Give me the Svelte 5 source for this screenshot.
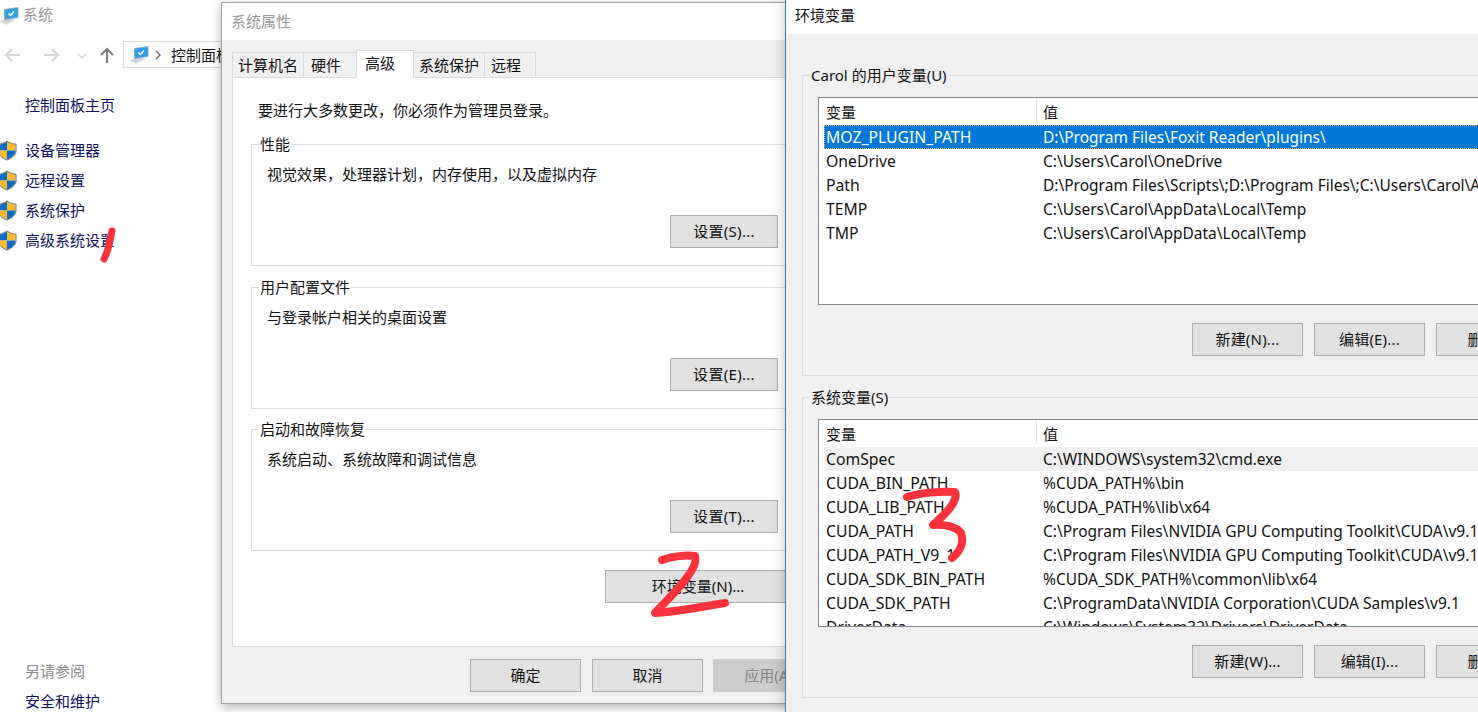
<script>
  const links = ['设备管理器', '远程设置', '系统保护', '高级系统设置'];

  const groups = [
    { title: '性能', desc: '视觉效果，处理器计划，内存使用，以及虚拟内存', btn: '设置(S)...' },
    { title: '用户配置文件', desc: '与登录帐户相关的桌面设置', btn: '设置(E)...' },
    { title: '启动和故障恢复', desc: '系统启动、系统故障和调试信息', btn: '设置(T)...' }
  ];

  const tabs = ['计算机名', '硬件', '高级', '系统保护', '远程'];

  const userVars = [
    ['MOZ_PLUGIN_PATH', 'D:\\Program Files\\Foxit Reader\\plugins\\'],
    ['OneDrive', 'C:\\Users\\Carol\\OneDrive'],
    ['Path', 'D:\\Program Files\\Scripts\\;D:\\Program Files\\;C:\\Users\\Carol\\AppData\\Local\\Programs'],
    ['TEMP', 'C:\\Users\\Carol\\AppData\\Local\\Temp'],
    ['TMP', 'C:\\Users\\Carol\\AppData\\Local\\Temp']
  ];

  const sysVars = [
    ['ComSpec', 'C:\\WINDOWS\\system32\\cmd.exe'],
    ['CUDA_BIN_PATH', '%CUDA_PATH%\\bin'],
    ['CUDA_LIB_PATH', '%CUDA_PATH%\\lib\\x64'],
    ['CUDA_PATH', 'C:\\Program Files\\NVIDIA GPU Computing Toolkit\\CUDA\\v9.1'],
    ['CUDA_PATH_V9_1', 'C:\\Program Files\\NVIDIA GPU Computing Toolkit\\CUDA\\v9.1'],
    ['CUDA_SDK_BIN_PATH', '%CUDA_SDK_PATH%\\common\\lib\\x64'],
    ['CUDA_SDK_PATH', 'C:\\ProgramData\\NVIDIA Corporation\\CUDA Samples\\v9.1'],
    ['DriverData', 'C:\\Windows\\System32\\Drivers\\DriverData']
  ];

  const varGroups = [
    { title: 'Carol 的用户变量(U)', rows: userVars, cls: 'selected', btns: ['新建(N)...', '编辑(E)...', '删除(L)'] },
    { title: '系统变量(S)', rows: sysVars, cls: 'hover', btns: ['新建(W)...', '编辑(I)...', '删除(L)'] }
  ];
</script>

{#snippet computer()}
  <svg class="pc" width="19" height="18" viewBox="0 0 19 18">
    <path d="M0 14.5 L8 11 L15 13 L6 17.5 Z" fill="#cfd3d6" stroke="#e4e6e8" stroke-width="0.6" />
    <path d="M4.5 2.5 L18 0.5 L18 10.5 L4.5 12.5 Z" fill="#2f9fe6" stroke="#8fa6b5" stroke-width="0.8" />
    <path d="M8.5 6.5 L10.5 8.5 L14 4.5" fill="none" stroke="#fff" stroke-width="1.5" />
  </svg>
{/snippet}

{#snippet shield()}
  <svg class="shield" width="20" height="21" viewBox="0 0 20 21">
    <path d="M1.5 4.5 C4.5 4.5 7.5 3.2 10 1.2 L10 10.5 L1.5 10.5 Z" fill="#0a6cc4" />
    <path d="M18.5 4.5 C15.5 4.5 12.5 3.2 10 1.2 L10 10.5 L18.5 10.5 Z" fill="#fcb92c" />
    <path d="M1.5 10.5 L10 10.5 L10 19.6 C5.5 17.8 1.5 15 1.5 11 Z" fill="#fcb92c" />
    <path d="M18.5 10.5 L10 10.5 L10 19.6 C14.5 17.8 18.5 15 18.5 11 Z" fill="#0a6cc4" />
    <path d="M10 1 C7 3 4 4.2 1 4.2 L1 11 C1 15 5 18 10 20 C15 18 19 15 19 11 L19 4.2 C16 4.2 13 3 10 1 Z" fill="none" stroke="#6b6b6b" stroke-width="1" />
  </svg>
{/snippet}

<div class="desktop">
  <div class="system">
    <div class="sys-title">
      {@render computer()}
      <span>系统</span>
    </div>
    <div class="nav">
      <svg width="112" height="27" viewBox="0 0 112 27">
        <path d="M20 14 L6 14 M12 8 L6 14 L12 20" fill="none" stroke="#d4d4d4" stroke-width="2" />
        <path d="M44 14 L58 14 M52 8 L58 14 L52 20" fill="none" stroke="#d4d4d4" stroke-width="2" />
        <path d="M78 13 L82 17 L86 13" fill="none" stroke="#d4d4d4" stroke-width="1.5" />
        <path d="M107 22 L107 8 M101 14 L107 8 L113 14" fill="none" stroke="#7a7a7a" stroke-width="2" />
      </svg>
      <div class="address">
        {@render computer()}
        <svg class="sep" width="8" height="10" viewBox="0 0 8 10">
          <path d="M2 1 L6 5 L2 9" fill="none" stroke="#6d6d6d" stroke-width="1.4" />
        </svg>
        <span>控制面板</span>
      </div>
    </div>
    <div class="home">控制面板主页</div>
    <div class="links">
      {#each links as link}
        <div class="link">
          {@render shield()}
          <span>{link}</span>
        </div>
      {/each}
    </div>
    <div class="see-also">另请参阅</div>
    <div class="security">安全和维护</div>
  </div>

  <div class="dialog props">
    <div class="dlg-title">系统属性</div>
    <div class="tabs">
      {#each tabs as tab, i}
        <div class="tab" class:active={i === 2}>{tab}</div>
      {/each}
    </div>
    <div class="page">
      <p class="intro">要进行大多数更改，你必须作为管理员登录。</p>
      {#each groups as group}
        <div class="group">
          <span class="legend">{group.title}</span>
          <p class="desc">{group.desc}</p>
          <div class="group-btn">
            <button>{group.btn}</button>
          </div>
        </div>
      {/each}
      <button class="env-btn">环境变量(N)...</button>
    </div>
    <div class="footer">
      <button>确定</button>
      <button>取消</button>
      <button class="disabled">应用(A)</button>
    </div>
  </div>

  <div class="dialog env">
    <div class="env-title">环境变量</div>
    <div class="env-body">
      {#each varGroups as vg}
        <div class="var-group">
          <span class="legend gray">{vg.title}</span>
          <div class="list">
            <div class="list-head">
              <span>变量</span>
              <span class="val-head">值</span>
            </div>
            {#each vg.rows as row, i}
              <div class="row {i === 0 ? vg.cls : ''}">
                <span class="key">{row[0]}</span>
                <span class="val">{row[1]}</span>
              </div>
            {/each}
          </div>
          <div class="var-btns">
            {#each vg.btns as b}
              <button>{b}</button>
            {/each}
          </div>
        </div>
      {/each}
    </div>
  </div>

  <svg class="marks" width="1478" height="712" viewBox="0 0 1478 712">
    <g fill="none" stroke="#f8333c" stroke-linecap="round" stroke-linejoin="round">
      <path d="M112 231 C110 242 108 252 104 259" stroke-width="7" />
      <path d="M662 560 C672 556 686 555 695 556 C697 562 693 570 685 580 C676 592 664 603 655 613 C675 612 700 607 725 603" stroke-width="8" />
      <path d="M907 497 C920 493 940 491 955 492 C958 500 950 510 933 525 C945 524 957 527 961 533 C964 542 961 551 952 558" stroke-width="8" />
    </g>
  </svg>
</div>

<style>
  :global(body) {
    margin: 0;
    background: #fff;
    overflow: hidden;
  }

  .desktop {
    position: relative;
    width: 1478px;
    height: 712px;
    overflow: hidden;
    font-family: "Noto Sans", "Noto Sans CJK SC", sans-serif;
    font-size: 15px;
    line-height: 20px;
    color: #111;
  }

  p {
    margin: 0;
  }

  button {
    font: inherit;
    color: #111;
    background: #e1e1e1;
    border: 1px solid #adadad;
    width: 111px;
    height: 33px;
    padding: 0 0 2px;
    white-space: nowrap;
    flex: none;
  }

  /* back window */
  .system {
    width: 221px;
  }

  .sys-title {
    display: flex;
    align-items: center;
    gap: 4px;
    height: 28px;
    padding: 2px 0 0;
    margin-bottom: -2px;
    color: #999;
  }

  .sys-title span {
    margin-top: -4px;
  }

  .pc {
    flex: none;
  }

  .nav {
    display: flex;
    margin-top: 13px;
    height: 27px;
    width: 400px;
  }

  .nav svg {
    flex: none;
    overflow: visible;
  }

  .address {
    display: flex;
    align-items: center;
    box-sizing: border-box;
    height: 27px;
    width: 200px;
    margin-left: 11px;
    padding-left: 6px;
    border: 1px solid #d9d9d9;
  }

  .sep {
    margin: 0 9px 0 5px;
  }

  .address span {
    white-space: nowrap;
  }

  .home {
    margin: 27px 0 0 25px;
    color: #101060;
  }

  .links {
    margin-top: 20px;
  }

  .link {
    display: flex;
    align-items: center;
    height: 30px;
    margin-left: -3px;
    gap: 8px;
    color: #101060;
  }

  .shield {
    flex: none;
  }

  .see-also {
    margin: 406px 0 0 25px;
    color: #8a8a8a;
  }

  .security {
    margin: 10px 0 0 25px;
    color: #101060;
  }

  /* windows */
  .dialog {
    position: absolute;
    box-sizing: border-box;
    background: #f0f0f0;
  }

  .props {
    left: 221px;
    top: 2px;
    width: 600px;
    height: 702px;
    border: 1px solid #a3a3a3;
    box-shadow: 0 3px 10px rgba(0, 0, 0, 0.3);
  }

  .dlg-title {
    height: 37px;
    padding-left: 9px;
    line-height: 36px;
    background: #fff;
    color: #999;
  }

  .tabs {
    display: flex;
    align-items: flex-end;
    height: 28px;
    padding: 10px 0 0 10px;
    position: relative;
    z-index: 1;
  }

  .tab {
    box-sizing: border-box;
    width: 72px;
    height: 26px;
    padding-left: 5px;
    margin-right: -1px;
    line-height: 25px;
    border: 1px solid #d9d9d9;
    white-space: nowrap;
  }

  .tab:nth-child(2) {
    width: 54px;
    padding-left: 7px;
  }

  .tab:nth-child(5) {
    width: 52px;
    padding-left: 6px;
  }

  .tab.active {
    width: 58px;
    height: 28px;
    padding-left: 8px;
    line-height: 24px;
    background: #fff;
    border-bottom-color: #fff;
  }

  .page {
    box-sizing: border-box;
    height: 570px;
    margin: -1px 0 0 10px;
    padding: 22px 0 0 0;
    background: #fff;
    border: 1px solid #d9d9d9;
  }

  .intro {
    margin-left: 25px;
  }

  .group {
    position: relative;
    box-sizing: border-box;
    width: 539px;
    height: 122px;
    margin: 21px 0 0 18px;
    padding: 19px 11px 0 15px;
    border: 1px solid #dcdcdc;
  }

  .group:first-of-type {
    margin-top: 24px;
  }

  .group:nth-of-type(3) {
    margin-top: 20px;
  }

  .legend {
    position: absolute;
    top: -11px;
    left: 7px;
    padding: 0 1px;
    background: #fff;
    white-space: nowrap;
  }

  .legend.gray {
    background: #f0f0f0;
  }

  .group-btn {
    display: flex;
    justify-content: flex-end;
    margin-top: 31px;
  }

  .group-btn button {
    width: 108px;
    letter-spacing: 0.3px;
  }

  .env-btn {
    display: block;
    width: 186px;
    margin: 19px 0 0 372px;
  }

  .footer {
    display: flex;
    gap: 11px;
    padding: 12px 0 0 248px;
  }

  .footer .disabled {
    margin-left: -1px;
    background: #cccccc;
    border-color: #cccccc;
    color: #838383;
  }

  /* environment variables */
  .env {
    left: 785px;
    top: 0;
    width: 720px;
    height: 712px;
    border-left: 1px solid #2a7fc9;
    box-shadow: 0 0 12px rgba(0, 0, 0, 0.25);
  }

  .env-title {
    height: 34px;
    padding-left: 9px;
    line-height: 31px;
    background: #fff;
  }

  .env-body {
    padding: 41px 0 0 16px;
  }

  .var-group {
    position: relative;
    box-sizing: border-box;
    width: 700px;
    height: 301px;
    margin-bottom: 21px;
    padding: 21px 0 0 15px;
    border: 1px solid #dcdcdc;
  }

  .list {
    box-sizing: border-box;
    width: 680px;
    height: 208px;
    overflow: hidden;
    background: #fff;
    border: 1px solid #828790;
  }

  .list-head {
    display: grid;
    grid-template-columns: 217px 1fr;
    height: 27px;
    line-height: 28px;
    padding-left: 7px;
  }

  .val-head {
    padding-left: 6px;
    margin-left: -7px;
    border-left: 1px solid #e5e5e5;
    height: 24px;
  }

  .row {
    display: grid;
    grid-template-columns: 217px 1fr;
    box-sizing: border-box;
    height: 24px;
    margin-left: 5px;
    padding-left: 2px;
    line-height: 24px;
    white-space: nowrap;
  }

  .key {
    font-size: 15.75px;
  }

  .val {
    overflow: hidden;
    font-size: 15.5px;
  }

  .row.selected {
    background: #0078d7;
    color: #fff;
    outline: 1px dotted #ffb04a;
    outline-offset: -1px;
  }

  .row.hover {
    background: #f0f0f0;
  }

  .var-btns {
    display: flex;
    gap: 11px;
    margin: 18px 0 0 374px;
  }

  .var-btns button {
    letter-spacing: 0.2px;
  }

  .marks {
    position: absolute;
    left: 0;
    top: 0;
    pointer-events: none;
  }
</style>
